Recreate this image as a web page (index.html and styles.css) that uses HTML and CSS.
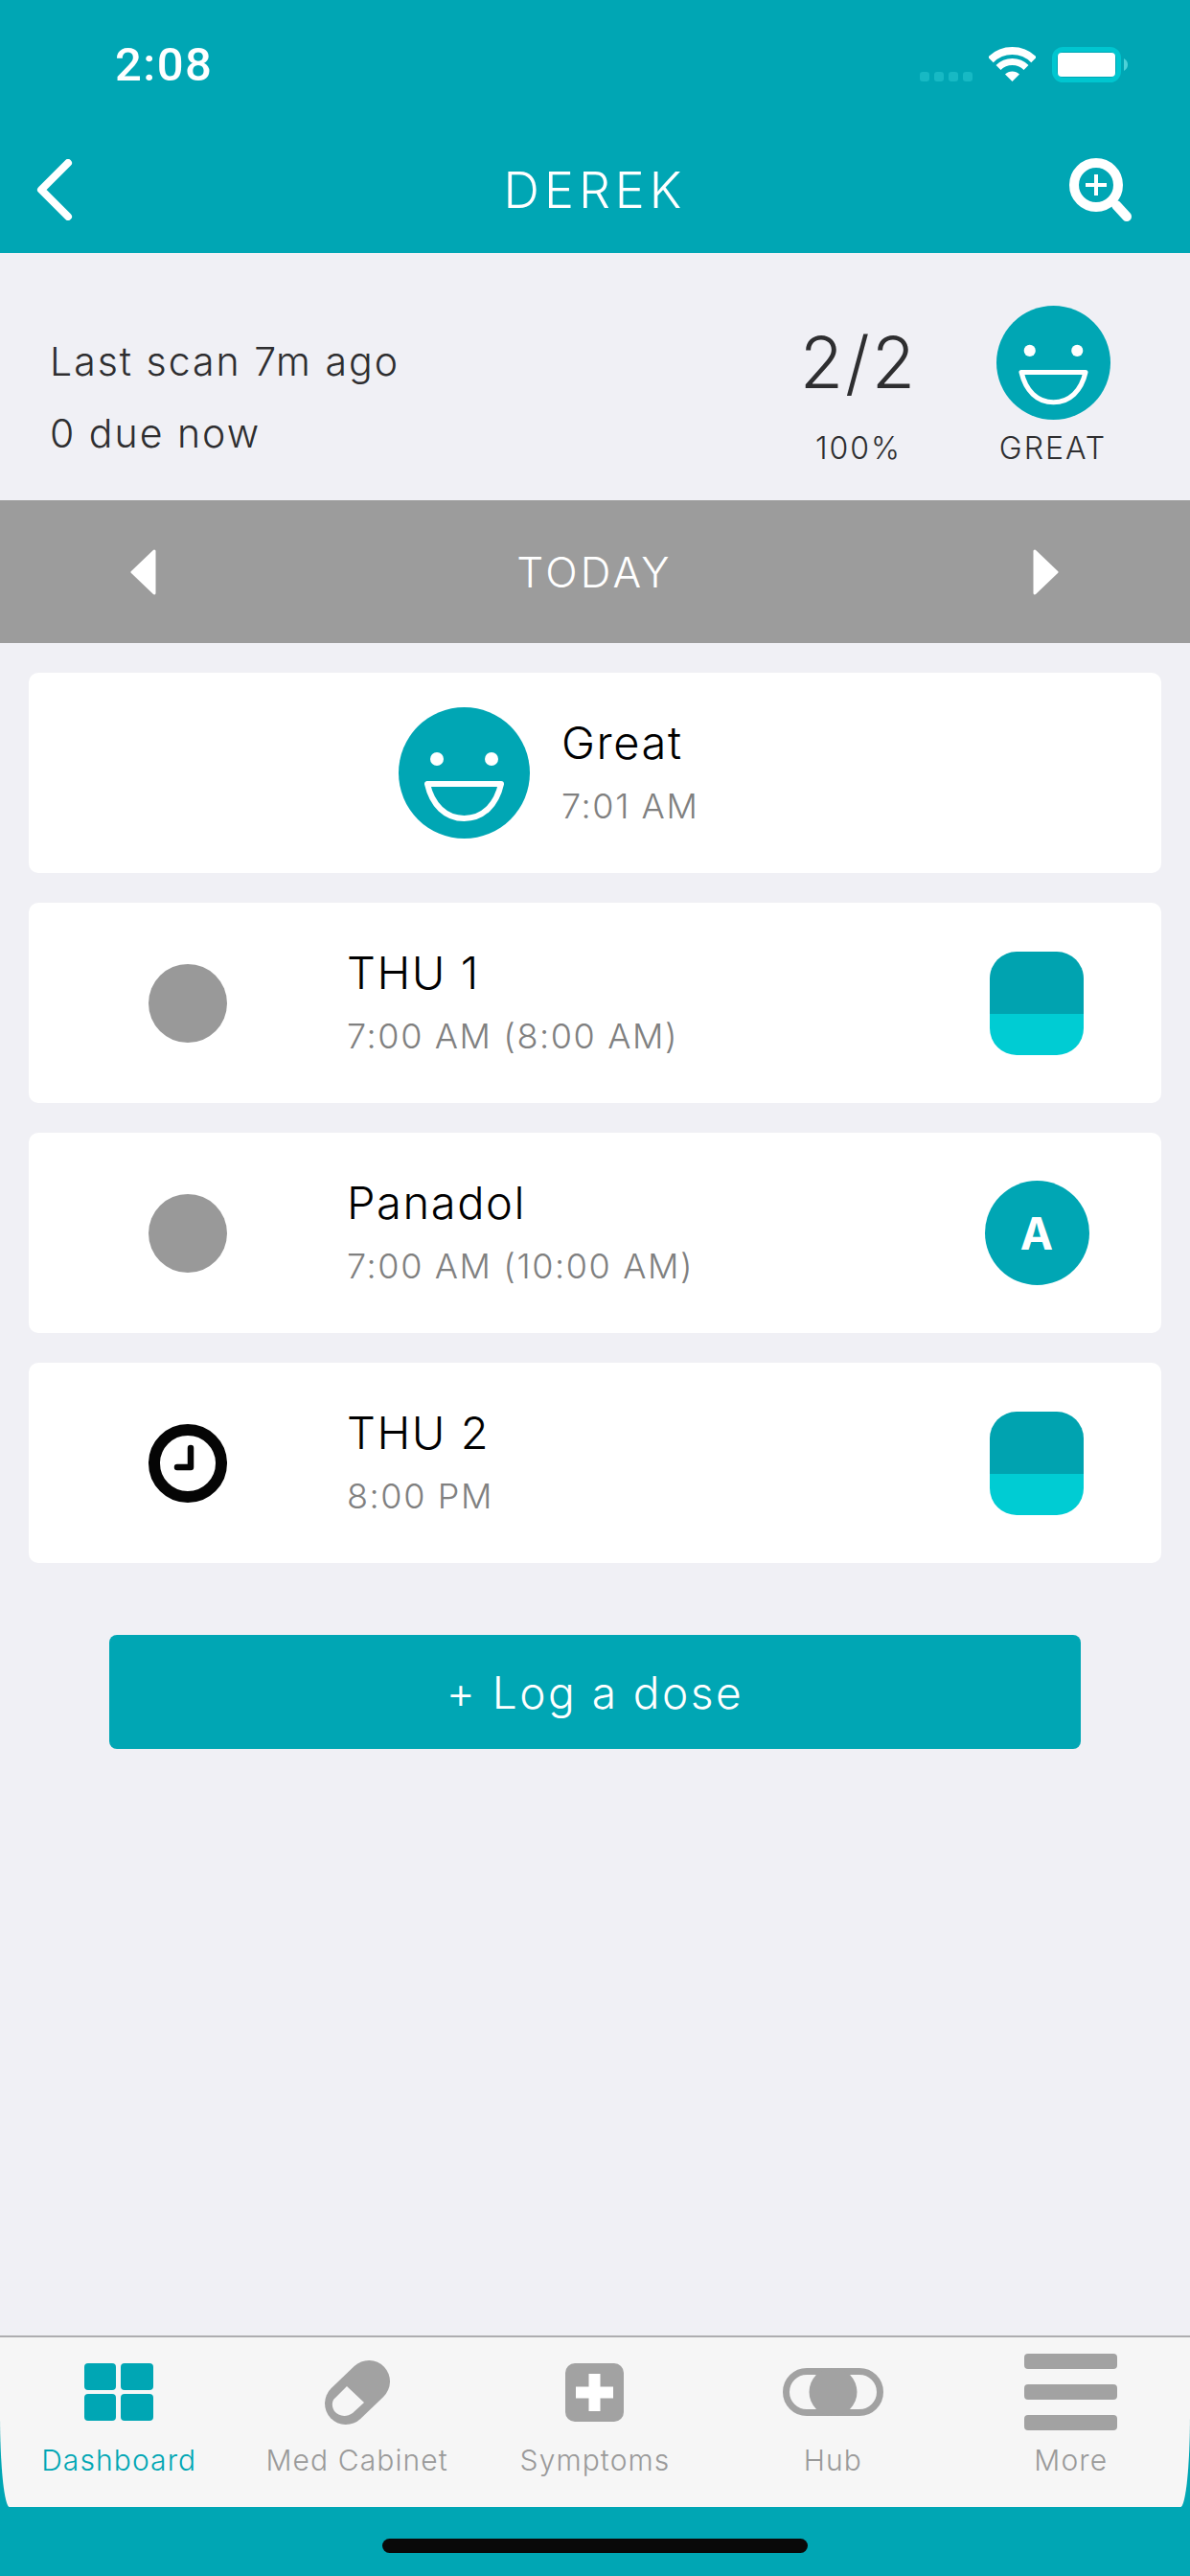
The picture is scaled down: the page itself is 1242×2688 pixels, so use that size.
FILE: index.html
```html
<!DOCTYPE html>
<html lang="en">
<head>
<meta charset="utf-8">
<title>Derek</title>
<link rel="stylesheet" href="styles.css">
</head>
<body>
<svg class="defs" width="0" height="0" aria-hidden="true">
  <symbol id="face" viewBox="0 0 137 137">
    <circle cx="68.5" cy="68.5" r="68.5" fill="#00a6b4"/>
    <circle cx="40" cy="54" r="7" fill="#fff"/>
    <circle cx="97" cy="54" r="7" fill="#fff"/>
    <path d="M30 80H107C102 102 88 116 68.5 116C49 116 35 102 30 80Z" fill="none" stroke="#fff" stroke-width="6" stroke-linejoin="round"/>
  </symbol>
  <symbol id="capsule" viewBox="0 0 98 108">
    <path d="M28 0H70A28 28 0 0 1 98 28V65H0V28A28 28 0 0 1 28 0Z" fill="#00a3b0"/>
    <path d="M0 65H98V80A28 28 0 0 1 70 108H28A28 28 0 0 1 0 80Z" fill="#00ccd3"/>
  </symbol>
</svg>
<div class="app">
  <header class="header">
    <div class="status">
      <span class="time">2:08</span>
      <div class="status-icons">
        <div class="dots"><i></i><i></i><i></i><i></i></div>
        <svg class="wifi" width="49" height="36" viewBox="0 0 49 36"><path d="M1.9 13.4A32 32 0 0 1 47.1 13.4" fill="none" stroke="#fff" stroke-width="8"/><path d="M10 21.5A20.5 20.5 0 0 1 39 21.5" fill="none" stroke="#fff" stroke-width="7"/><path d="M24.5 36L17 28.5A10.6 10.6 0 0 1 32 28.5Z" fill="#fff"/></svg>
        <svg class="battery" width="80" height="37" viewBox="0 0 80 37"><rect x="2.5" y="2.5" width="67" height="32" rx="9" fill="none" stroke="#00c6d0" stroke-width="5"/><rect x="6" y="6" width="60" height="25" rx="4" fill="#fff"/><path d="M75 12C78 14 79 16 79 18.500C79 21 78 23 75 25Z" fill="#4dd2d8"/></svg>
      </div>
    </div>
    <nav class="nav">
      <svg class="back" width="38" height="64" viewBox="0 0 38 64"><path d="M33 4L5 32L33 60" fill="none" stroke="#fff" stroke-width="8" stroke-linecap="round" stroke-linejoin="round"/></svg>
      <h1 class="title">DEREK</h1>
      <svg class="search" width="65" height="66" viewBox="0 0 65 66"><circle cx="28" cy="28" r="23" fill="none" stroke="#fff" stroke-width="10"/><path d="M49 49L60 61" fill="none" stroke="#fff" stroke-width="10" stroke-linecap="round"/><path d="M17 28H39M28 17V39" fill="none" stroke="#fff" stroke-width="4"/></svg>
    </nav>
  </header>

  <section class="summary">
    <div class="scan">
      <p>Last scan 7m ago</p>
      <p>0 due now</p>
    </div>
    <div class="stats">
      <div class="stat">
        <div class="stat-top"><span class="ratio">2/2</span></div>
        <span class="stat-label">100%</span>
      </div>
      <div class="stat">
        <div class="stat-top"><svg width="119" height="119"><use href="#face"/></svg></div>
        <span class="stat-label">GREAT</span>
      </div>
    </div>
  </section>

  <div class="datebar">
    <svg width="27" height="48" viewBox="0 0 27 48"><path d="M25 2V46L2 24Z" fill="#fff" stroke="#fff" stroke-width="3" stroke-linejoin="round"/></svg>
    <span class="date">TODAY</span>
    <svg width="27" height="48" viewBox="0 0 27 48"><path d="M2 2V46L25 24Z" fill="#fff" stroke="#fff" stroke-width="3" stroke-linejoin="round"/></svg>
  </div>

  <main class="list">
    <article class="card card-mood">
      <svg width="137" height="137"><use href="#face"/></svg>
      <div class="card-text">
        <span class="card-title">Great</span>
        <span class="card-sub">7:01 AM</span>
      </div>
    </article>
    <article class="card">
      <span class="dot"></span>
      <div class="card-text">
        <span class="card-title">THU 1</span>
        <span class="card-sub">7:00 AM (8:00 AM)</span>
      </div>
      <div class="card-end"><svg width="98" height="108"><use href="#capsule"/></svg></div>
    </article>
    <article class="card">
      <span class="dot"></span>
      <div class="card-text">
        <span class="card-title">Panadol</span>
        <span class="card-sub">7:00 AM (10:00 AM)</span>
      </div>
      <div class="card-end"><span class="badge">A</span></div>
    </article>
    <article class="card">
      <svg class="clock" width="82" height="82" viewBox="0 0 82 82"><circle cx="41" cy="41" r="35" fill="none" stroke="#050505" stroke-width="12"/><path d="M44 25V45H30" fill="none" stroke="#050505" stroke-width="6.500" stroke-linecap="round" stroke-linejoin="round"/></svg>
      <div class="card-text">
        <span class="card-title">THU 2</span>
        <span class="card-sub">8:00 PM</span>
      </div>
      <div class="card-end"><svg width="98" height="108"><use href="#capsule"/></svg></div>
    </article>
    <button class="log">+ Log a dose</button>
  </main>

  <footer class="footer">
    <div class="tabs">
      <div class="tab active">
        <div class="tab-icon"><svg width="72" height="60" viewBox="0 0 72 60"><rect width="33" height="28" rx="4" fill="#00a6b4"/><rect x="38" width="34" height="28" rx="4" fill="#00a6b4"/><rect y="32" width="33" height="28" rx="4" fill="#00a6b4"/><rect x="38" y="32" width="34" height="28" rx="4" fill="#00a6b4"/></svg></div>
        <span class="tab-label">Dashboard</span>
      </div>
      <div class="tab">
        <div class="tab-icon"><svg width="68" height="67" viewBox="0 0 68 67"><path d="M46 22L22 45" fill="none" stroke="#a2a2a2" stroke-width="44" stroke-linecap="round"/><path d="M23 27L41 44L29 55C22 60 14 58 10 53C7 48 7 42 11 39Z" fill="#f6f6f6"/></svg></div>
        <span class="tab-label">Med Cabinet</span>
      </div>
      <div class="tab">
        <div class="tab-icon"><svg width="61" height="61" viewBox="0 0 61 61"><rect width="61" height="61" rx="10" fill="#a2a2a2"/><path d="M11 30.500H50M30.500 11V50" fill="none" stroke="#fff" stroke-width="12"/></svg></div>
        <span class="tab-label">Symptoms</span>
      </div>
      <div class="tab">
        <div class="tab-icon"><svg width="105" height="50" viewBox="0 0 105 50"><rect x="3.500" y="3.500" width="98" height="43" rx="21.500" fill="none" stroke="#a2a2a2" stroke-width="7"/><circle cx="52.500" cy="25" r="25" fill="#a2a2a2"/></svg></div>
        <span class="tab-label">Hub</span>
      </div>
      <div class="tab">
        <div class="tab-icon"><div class="bars"><i></i><i></i><i></i></div></div>
        <span class="tab-label">More</span>
      </div>
    </div>
    <div class="home"><span class="home-bar"></span></div>
  </footer>
</div>
</body>
</html>
```

FILE: styles.css
```css
* { box-sizing: border-box; }
html, body { margin: 0; padding: 0; }
body {
  width: 1242px;
  height: 2688px;
  overflow: hidden;
  font-family: Inter, "Open Sans", sans-serif;
  font-weight: 300;
  color: #2e2e30;
}
.defs { position: absolute; }
.app {
  height: 2688px;
  display: flex;
  flex-direction: column;
  background: #f0f0f5;
}

/* header */
.header { background: #00a6b4; height: 264px; color: #fff; }
.status {
  height: 132px;
  display: flex;
  align-items: center;
  justify-content: space-between;
  padding: 0 64px 0 120px;
}
.time {
  font-family: Roboto, sans-serif;
  font-weight: 500;
  font-size: 49px;
  letter-spacing: 1.5px;
  margin-top: 2px;
}
.status-icons { display: flex; align-items: flex-start; height: 37px; margin-top: 2px; }
.dots { display: flex; gap: 5px; margin-top: 26px; margin-right: 17px; }
.dots i { width: 10px; height: 10px; border-radius: 3px; background: #17b9c4; }
.wifi { margin-right: 17px; }
.nav {
  height: 132px;
  display: grid;
  grid-template-columns: 1fr auto 1fr;
  align-items: center;
  padding: 0 38px;
}
.title {
  margin: 0;
  font-size: 52px;
  font-weight: 300;
  letter-spacing: 5px;
}
.search { justify-self: end; margin-right: 23px; }

/* summary */
.summary {
  height: 258px;
  display: flex;
  justify-content: space-between;
  align-items: flex-start;
  padding: 0 63px 0 52px;
}
.scan { padding-top: 76px; }
.scan p { margin: 0; font-size: 41px; line-height: 75px; letter-spacing: 2px; }
.stats { display: flex; gap: 43px; padding-top: 54px; }
.stat { width: 160px; display: flex; flex-direction: column; align-items: center; }
.stat-top { height: 120px; display: flex; align-items: center; justify-content: center; }
.ratio { font-size: 74px; letter-spacing: 2px; }
.stat-label { font-size: 32px; line-height: 40px; margin-top: 10px; letter-spacing: 2px; }

/* date bar */
.datebar {
  height: 149px;
  background: #9c9c9c;
  display: flex;
  align-items: center;
  justify-content: space-between;
  padding: 0 137px 0 136px;
}
.date { color: #fff; font-size: 44px; letter-spacing: 3.3px; }

/* list */
.list {
  flex: 1;
  display: flex;
  flex-direction: column;
  gap: 31px;
  padding: 31px 30px 0;
}
.card {
  height: 209px;
  background: #fff;
  border-radius: 10px;
  display: flex;
  align-items: center;
  padding: 0 75px 0 125px;
}
.card-mood { padding-left: 386px; gap: 33px; }
.card-text { display: flex; flex-direction: column; }
.card-title { font-size: 47px; line-height: 70px; color: #000; letter-spacing: 1.6px; }
.card-sub { font-size: 36px; line-height: 63px; color: #808080; letter-spacing: 1.6px; }
.card .card-text { margin-left: 125px; }
.card-mood .card-text { margin-left: 0; }
.dot { width: 82px; height: 82px; border-radius: 50%; background: #999; }
.card-end { margin-left: auto; width: 110px; display: flex; justify-content: center; }
.badge {
  width: 109px;
  height: 109px;
  border-radius: 50%;
  background: #00a6b4;
  color: #fff;
  font-size: 46px;
  font-weight: 700;
  display: flex;
  align-items: center;
  justify-content: center;
}
.log {
  margin: 44px 84px 0;
  height: 119px;
  border: 0;
  border-radius: 8px;
  background: #00a6b4;
  color: #fff;
  font-family: inherit;
  font-weight: 300;
  font-size: 46px;
  letter-spacing: 2.5px;
}

/* footer */
.footer { background: #00a6b4; }
.tabs {
  height: 179px;
  background: #f6f6f6;
  border-top: 2px solid #adadb0;
  border-radius: 0 0 10px 10px / 0 0 96px 96px;
  display: grid;
  grid-template-columns: repeat(5, 1fr);
  padding-top: 14px;
}
.tab { display: flex; flex-direction: column; align-items: center; color: #9a9a9a; }
.tab.active { color: #00a6b4; }
.tab-icon { height: 86px; display: flex; align-items: center; justify-content: center; }
.tab-label { font-size: 30px; line-height: 40px; margin-top: 8px; white-space: nowrap; letter-spacing: 1.1px; }
.bars { display: flex; flex-direction: column; gap: 16px; }
.bars i { display: block; width: 97px; height: 16px; border-radius: 4px; background: #a2a2a2; }
.home { height: 72px; display: flex; justify-content: center; padding-top: 33px; }
.home-bar { width: 444px; height: 15px; border-radius: 8px; background: #090909; }
```
